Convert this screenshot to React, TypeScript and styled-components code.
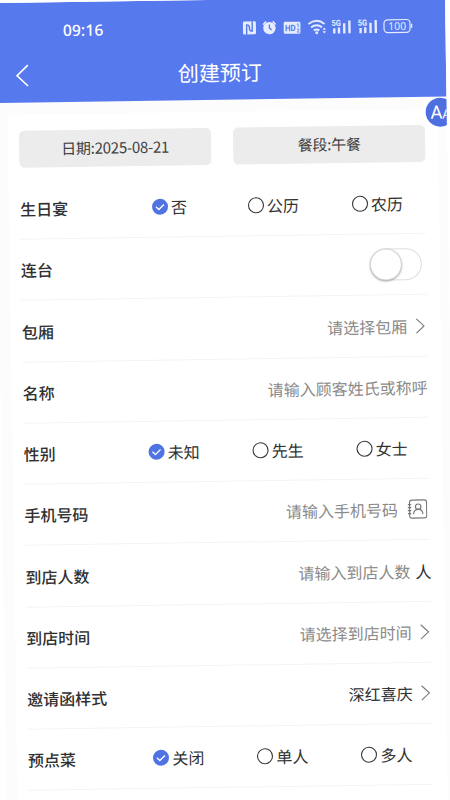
import React from "react";
import styled, { createGlobalStyle } from "styled-components";

const GlobalStyle = createGlobalStyle`
  html, body { margin: 0; padding: 0; background: #fff; }
  *, *::before, *::after { box-sizing: border-box; }
  body { font-family: "Noto Sans CJK SC", "Noto Sans", sans-serif; color: #303030; }
`;

const Viewport = styled.div`
  width: 450px;
  height: 800px;
  overflow: hidden;
  background: #fff;
`;

const Screen = styled.div`
  width: 449.5px;
  height: 820px;
  margin: 3.4px 0 0 -5px;
  overflow: hidden;
  background: #fcfcfc;
  transform: rotate(-0.83deg);
  transform-origin: 5px -3.4px;
  position: relative;
`;

const Header = styled.header`
  height: 99.5px;
  background: #5779ee;
  color: #fff;
`;

const StatusBar = styled.div`
  height: 53px;
  padding: 3px 31px 0 67.5px;
  display: flex;
  align-items: center;
  justify-content: space-between;
`;

const Clock = styled.span`
  font: 500 15.6px/20px "Noto Sans", "Noto Sans CJK SC", sans-serif;
  letter-spacing: 0.1px;
`;

const StatusIcons = styled.svg`
  display: block;
  width: 172px;
  height: 20px;
  color: #e6ecff;
`;

const TitleBar = styled.div`
  height: 40px;
  display: grid;
  grid-template-columns: 60px 1fr 62px;
  align-items: center;
`;

const BackIcon = styled.svg`
  width: 14px;
  height: 24px;
  margin: -1px 0 0 18.5px;
`;

const Title = styled.h1`
  margin: -2px 0 0;
  font-size: 21px;
  line-height: 30px;
  font-weight: 400;
  text-align: center;
`;

const Card = styled.main`
  margin: 12px 8.5px 0 11px;
  padding: 16px 14px 0 11px;
  height: 720px;
  background: #fff;
`;

const Filters = styled.div`
  display: grid;
  grid-template-columns: 192px 192px;
  justify-content: space-between;
  margin: 0 -1px 11.4px 0;
`;

const Filter = styled.button`
  height: 37px;
  padding: 0;
  border: 0;
  border-radius: 5px;
  background: #ececed;
  color: #404040;
  font: 400 15px/22px "Noto Sans CJK SC", sans-serif;
  letter-spacing: -0.25px;
`;

const Row = styled.div`
  height: 61.25px;
  border-bottom: 1px solid #f3f3f3;
  display: flex;
  align-items: center;
  justify-content: space-between;
  font-size: 16px;
  line-height: 24px;
`;

const Label = styled.span`
  flex: none;
  width: 84px;
  font-weight: 500;
  white-space: nowrap;
`;

const Choices = styled.div<{ $shift: number }>`
  flex: none;
  display: grid;
  grid-template-columns: repeat(3, 104px);
  margin-right: ${(p) => p.$shift - 6}px;
`;

const Choice = styled.div`
  display: flex;
  align-items: center;
  justify-content: center;
  gap: 3px;
`;

const RadioIcon = styled.svg`
  width: 16px;
  height: 16px;
  overflow: visible;
  flex: none;
`;

const Value = styled.div<{ $muted?: boolean }>`
  display: flex;
  align-items: center;
  white-space: nowrap;
  color: ${(p) => (p.$muted ? "#8a8a8a" : "#303030")};
`;

const Unit = styled.span`
  margin-left: 5px;
  margin-right: -1px;
  color: #303030;
`;

const ArrowIcon = styled.svg`
  width: 9px;
  height: 16px;
  margin: 0 2px 0 8.5px;
`;

const ContactIcon = styled.svg`
  width: 20px;
  height: 20px;
  margin: 0 2px 0 9.5px;
`;

const Switch = styled.div`
  width: 52px;
  height: 32px;
  margin-right: 4px;
  border: 1px solid #dedede;
  border-radius: 16px;
  background: #fff;
`;

const Knob = styled.div`
  width: 32px;
  height: 32px;
  margin: -1px 0 0 -1px;
  border-radius: 50%;
  background: #fff;
  border: 1px solid #d3d3d3;
  box-shadow: 0 1px 2px rgba(0, 0, 0, 0.3);
`;

const TextSizeBadge = styled.div`
  position: absolute;
  left: 428.8px;
  top: 100.6px;
  width: 29px;
  height: 29px;
  padding-left: 5px;
  border-radius: 50%;
  background: #4d6fe0;
  color: #fff;
  font: 400 18.5px/31px Roboto, sans-serif;
  white-space: nowrap;
  small { font-size: 13px; margin-left: -0.5px; }
`;

function Status() {
  return (
    <StatusIcons viewBox="0 0 172 20" fill="none" stroke="currentColor">
      <rect x="0.5" y="4" width="13" height="13" rx="1.3" fill="currentColor" stroke="none" />
      <path d="M4.2 17V7.4q2.8 0 2.8 2.8v.9q0 2.7 2.8 2.7V4" stroke="#5779ee" strokeWidth="1.4" />
      <circle cx="27" cy="11" r="6.2" fill="currentColor" stroke="none" />
      <path d="M20.7 7.5l3-3.2M33.3 7.5l-3-3.2" strokeWidth="1.6" />
      <path d="M27 7.5V11l2.2 2" stroke="#5779ee" strokeWidth="1.3" />
      <rect x="41.3" y="5" width="16.7" height="12" rx="1.3" fill="currentColor" stroke="none" />
      <text x="42.5" y="14.3" fill="#5779ee" stroke="none" fontSize="8.8" fontWeight="700" fontFamily="Roboto" textLength="10.8" lengthAdjust="spacingAndGlyphs">HD</text>
      <text x="53.9" y="10.6" fill="#5779ee" stroke="none" fontSize="5.5" fontWeight="700" fontFamily="Roboto">1</text>
      <text x="53.9" y="15.8" fill="#5779ee" stroke="none" fontSize="5.5" fontWeight="700" fontFamily="Roboto">2</text>
      <path d="M66 7.6q8.1-6.4 16.2 0M68.6 11q5.5-4.2 11 0M71.3 14q2.8-2 5.6 0" strokeWidth="1.9" />
      <circle cx="74.2" cy="16.4" r="1.5" fill="currentColor" stroke="none" />
      <path d="M80 13.4l1.8-2.1 1.8 2.1zM80 15l1.8 2.1 1.8-2.1z" fill="currentColor" stroke="none" />
      {[89, 115.3].map((x) => (
        <g key={x} transform={`translate(${x} 0)`}>
          <text x="0" y="9.9" fill="currentColor" stroke="none" fontSize="8.5" fontWeight="700" fontFamily="Roboto" textLength="9.5" lengthAdjust="spacingAndGlyphs">5G</text>
          <path d="M2.8 12.2V17.4M7.5 11.5V17.4M12.8 7.2V17.4M18 4.5V17.4" strokeWidth="2.4" />
        </g>
      ))}
      <rect x="141.6" y="4.4" width="26" height="12.8" rx="3.6" strokeWidth="1.2" />
      <path d="M169.2 8.8v4" strokeWidth="1.3" />
      <text x="145.8" y="14.7" fill="currentColor" stroke="none" fontSize="10.8" fontFamily="Noto Sans" textLength="17.8" lengthAdjust="spacingAndGlyphs">100</text>
    </StatusIcons>
  );
}

function Radio({ checked }: { checked: boolean }) {
  return (
    <RadioIcon viewBox="0 0 16 16" fill="none">
      {checked ? (
        <>
          <circle cx="8" cy="8" r="8" fill="#4f73e3" />
          <path d="M3.9 8l2.9 2.8 5.2-5" stroke="#fff" strokeWidth="1.3" />
        </>
      ) : (
        <circle cx="8" cy="8" r="7.5" stroke="#383838" strokeWidth="1.1" />
      )}
    </RadioIcon>
  );
}

function RadioGroup({ options, shift = 0 }: { options: string[]; shift?: number }) {
  return (
    <Choices $shift={shift}>
      {options.map((option, i) => (
        <Choice key={option}>
          <Radio checked={i === 0} />
          {option}
        </Choice>
      ))}
    </Choices>
  );
}

function Arrow() {
  return (
    <ArrowIcon viewBox="0 0 9 16" fill="none" stroke="#777" strokeWidth="1.1">
      <path d="M.6.8L8.3 8 .6 15.2" />
    </ArrowIcon>
  );
}

function Contact() {
  return (
    <ContactIcon viewBox="0 0 20 20" fill="none" stroke="#777" strokeWidth="1.1">
      <rect x="2.2" y="1" width="17" height="18" rx="2.2" />
      <path d="M.4 5.5h3.4M.4 8.5h3.4M.4 11.5h3.4M.4 14.5h3.4" />
      <circle cx="10.8" cy="7.7" r="2.7" />
      <path d="M6.1 15.2c.2-3.3 2-4.8 4.7-4.8s4.5 1.5 4.7 4.8" />
    </ContactIcon>
  );
}

export default function App() {
  return (
    <Viewport>
      <GlobalStyle />
      <Screen>
        <Header>
          <StatusBar>
            <Clock>09:16</Clock>
            <Status />
          </StatusBar>
          <TitleBar>
            <BackIcon viewBox="0 0 14 24" fill="none" stroke="#fff" strokeWidth="1.7">
              <path d="M12.8 1.6L2 12l10.8 10.4" />
            </BackIcon>
            <Title>创建预订</Title>
          </TitleBar>
        </Header>
        <Card>
          <Filters>
            <Filter>日期:2025-08-21</Filter>
            <Filter>餐段:午餐</Filter>
          </Filters>
          <Row>
            <Label>生日宴</Label>
            <RadioGroup options={["否", "公历", "农历"]} shift={1.6} />
          </Row>
          <Row>
            <Label>连台</Label>
            <Switch><Knob /></Switch>
          </Row>
          <Row>
            <Label>包厢</Label>
            <Value $muted>请选择包厢<Arrow /></Value>
          </Row>
          <Row>
            <Label>名称</Label>
            <Value $muted>请输入顾客姓氏或称呼</Value>
          </Row>
          <Row>
            <Label>性别</Label>
            <RadioGroup options={["未知", "先生", "女士"]} shift={0.4} />
          </Row>
          <Row>
            <Label>手机号码</Label>
            <Value $muted>请输入手机号码<Contact /></Value>
          </Row>
          <Row>
            <Label>到店人数</Label>
            <Value $muted>请输入到店人数<Unit>人</Unit></Value>
          </Row>
          <Row>
            <Label>到店时间</Label>
            <Value $muted>请选择到店时间<Arrow /></Value>
          </Row>
          <Row>
            <Label>邀请函样式</Label>
            <Value>深红喜庆<Arrow /></Value>
          </Row>
          <Row>
            <Label>预点菜</Label>
            <RadioGroup options={["关闭", "单人", "多人"]} />
          </Row>
        </Card>
        <TextSizeBadge>A<small>A</small></TextSizeBadge>
      </Screen>
    </Viewport>
  );
}
